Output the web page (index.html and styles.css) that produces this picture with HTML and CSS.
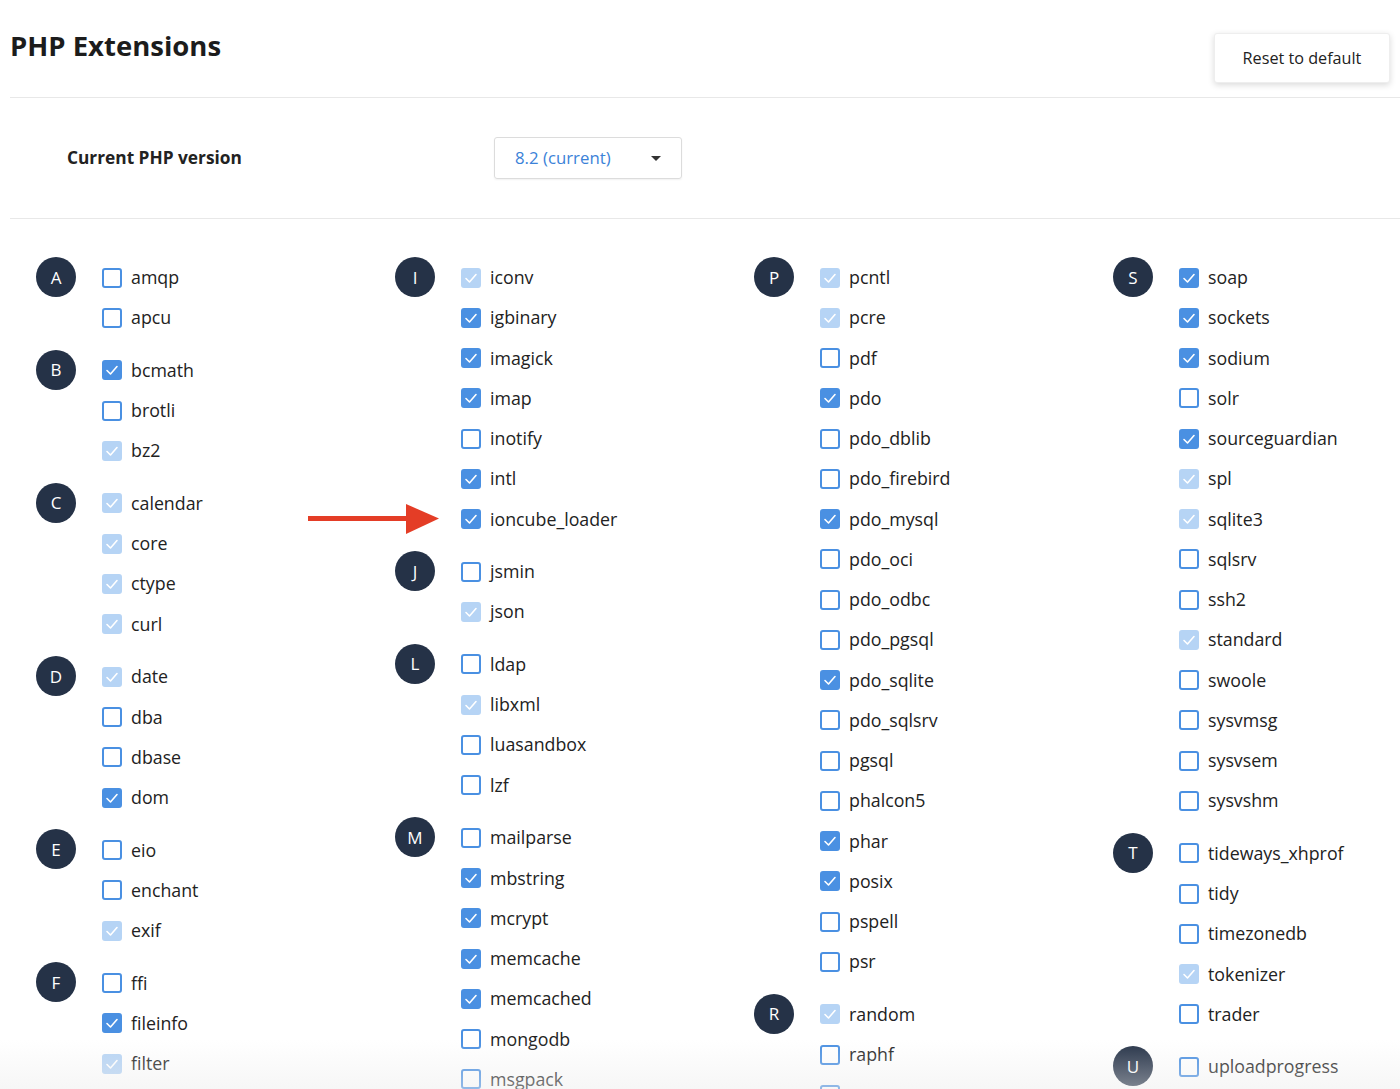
FILE: index.html
```html
<!DOCTYPE html>
<html lang="en">
<head>
<meta charset="utf-8">
<title>PHP Extensions</title>
<link rel="stylesheet" href="styles.css">
</head>
<body>
<div class="page">
  <header class="header">
    <h1 class="title">PHP Extensions</h1>
    <button class="reset-btn" type="button">Reset to default</button>
  </header>

  <section class="version-row">
    <div class="version-label">Current PHP version</div>
    <div class="select">
      <span class="select-value">8.2 (current)</span>
      <span class="caret"></span>
    </div>
  </section>

  <section class="grid" id="grid"></section>
</div>

<div class="arrow">
  <svg width="132" height="32" viewBox="0 0 132 32"><rect x="0" y="13" width="100" height="5" fill="#e43d26"/><polygon points="98,1 131,15.5 98,31" fill="#e43d26"/></svg>
</div>
<div class="fade"></div>

<script>
var columns = [
  [["A",[["amqp","u"],["apcu","u"]]],
   ["B",[["bcmath","c"],["brotli","u"],["bz2","d"]]],
   ["C",[["calendar","d"],["core","d"],["ctype","d"],["curl","d"]]],
   ["D",[["date","d"],["dba","u"],["dbase","u"],["dom","c"]]],
   ["E",[["eio","u"],["enchant","u"],["exif","d"]]],
   ["F",[["ffi","u"],["fileinfo","c"],["filter","d"]]]],
  [["I",[["iconv","d"],["igbinary","c"],["imagick","c"],["imap","c"],["inotify","u"],["intl","c"],["ioncube_loader","c"]]],
   ["J",[["jsmin","u"],["json","d"]]],
   ["L",[["ldap","u"],["libxml","d"],["luasandbox","u"],["lzf","u"]]],
   ["M",[["mailparse","u"],["mbstring","c"],["mcrypt","c"],["memcache","c"],["memcached","c"],["mongodb","u"],["msgpack","u"]]]],
  [["P",[["pcntl","d"],["pcre","d"],["pdf","u"],["pdo","c"],["pdo_dblib","u"],["pdo_firebird","u"],["pdo_mysql","c"],["pdo_oci","u"],["pdo_odbc","u"],["pdo_pgsql","u"],["pdo_sqlite","c"],["pdo_sqlsrv","u"],["pgsql","u"],["phalcon5","u"],["phar","c"],["posix","c"],["pspell","u"],["psr","u"]]],
   ["R",[["random","d"],["raphf","u"],["rar","u"]]]],
  [["S",[["soap","c"],["sockets","c"],["sodium","c"],["solr","u"],["sourceguardian","c"],["spl","d"],["sqlite3","d"],["sqlsrv","u"],["ssh2","u"],["standard","d"],["swoole","u"],["sysvmsg","u"],["sysvsem","u"],["sysvshm","u"]]],
   ["T",[["tideways_xhprof","u"],["tidy","u"],["timezonedb","u"],["tokenizer","d"],["trader","u"]]],
   ["U",[["uploadprogress","u"]]]]
];
var check = '<svg class="tick" viewBox="0 0 20 20"><polyline points="5,10.5 8.5,14 15,6.5" fill="none" stroke="#fff" stroke-width="1.6" stroke-linecap="round" stroke-linejoin="round"/></svg>';
var grid = document.getElementById('grid');
columns.forEach(function (col) {
  var c = document.createElement('div');
  c.className = 'column';
  col.forEach(function (g) {
    var html = '<div class="letter">' + g[0] + '</div><ul class="items">';
    g[1].forEach(function (it) {
      var cls = it[1] === 'c' ? 'box checked' : (it[1] === 'd' ? 'box disabled' : 'box');
      html += '<li class="item"><span class="' + cls + '">' + (it[1] === 'u' ? '' : check) + '</span><span class="name">' + it[0] + '</span></li>';
    });
    html += '</ul>';
    var gr = document.createElement('div');
    gr.className = 'group';
    gr.innerHTML = html;
    c.appendChild(gr);
  });
  grid.appendChild(c);
});
</script>
</body>
</html>
```
FILE: styles.css
```css
* { box-sizing: border-box; }
html, body {
  margin: 0;
  padding: 0;
  background: #fff;
  overflow: hidden;
  height: 1089px;
}
body {
  font-family: "Open Sans", "Noto Sans", sans-serif;
  color: #222;
}
.page {
  padding-left: 10px;
}
.header {
  height: 98px;
  border-bottom: 1px solid #e8e8e8;
  display: flex;
  justify-content: space-between;
  align-items: flex-start;
}
.title {
  margin: 28px 0 0 0;
  font-size: 27.5px;
  line-height: 36px;
  font-weight: 700;
  color: #1c1c1c;
}
.reset-btn {
  margin: 33px 10px 0 0;
  width: 176px;
  height: 50px;
  background: #fff;
  border: 1px solid #eee;
  border-radius: 3px;
  box-shadow: 0 2px 6px rgba(0,0,0,0.15);
  font-family: inherit;
  font-size: 16.2px;
  color: #222;
}
.version-row {
  height: 121px;
  border-bottom: 1px solid #e8e8e8;
  display: flex;
  align-items: center;
  padding-left: 57px;
}
.version-label {
  width: 427px;
  font-size: 17.3px;
  font-weight: 700;
  color: #222;
  margin-top: -2px;
}
.select {
  width: 188px;
  height: 42px;
  border: 1px solid #dcdcdc;
  border-radius: 3px;
  display: flex;
  align-items: center;
  justify-content: space-between;
  padding: 0 20px 0 20px;
  box-shadow: 0 1px 2px rgba(0,0,0,0.06);
  margin-top: -1px;
}
.select-value {
  font-size: 16.8px;
  color: #3b82d8;
}
.caret {
  width: 0;
  height: 0;
  border-left: 5px solid transparent;
  border-right: 5px solid transparent;
  border-top: 5px solid #333;
  margin-top: 2px;
}
.grid {
  display: grid;
  grid-template-columns: repeat(4, 359px);
  padding: 38px 0 0 26px;
}
.group {
  display: flex;
  align-items: flex-start;
  margin-bottom: 12.3px;
}
.letter {
  width: 40px;
  height: 40px;
  flex: none;
  border-radius: 50%;
  background: #253247;
  color: #fff;
  font-size: 17px;
  display: flex;
  align-items: center;
  justify-content: center;
}
.items {
  list-style: none;
  margin: 0 0 0 26px;
  padding: 0;
}
.item {
  height: 40.25px;
  display: flex;
  align-items: center;
}
.box {
  width: 20px;
  height: 20px;
  border: 2px solid #4a90e2;
  border-radius: 3px;
  background: #fff;
  flex: none;
  position: relative;
  margin-top: 1px;
}
.box.checked {
  background: #4a90e2;
  border-color: #4a90e2;
}
.box.disabled {
  background: #b6d4f5;
  border-color: #b6d4f5;
}
.tick {
  position: absolute;
  left: -2px;
  top: -2px;
  width: 20px;
  height: 20px;
}
.name {
  margin-left: 9px;
  font-size: 17.8px;
  color: #222;
}
.arrow {
  position: absolute;
  left: 308px;
  top: 503px;
  width: 132px;
  height: 32px;
}
.arrow svg { display: block; }
.fade {
  position: absolute;
  left: 0;
  right: 0;
  top: 1040px;
  height: 49px;
  background: linear-gradient(to bottom, rgba(240,240,240,0), rgba(236,236,236,0.45));
  pointer-events: none;
}
```
